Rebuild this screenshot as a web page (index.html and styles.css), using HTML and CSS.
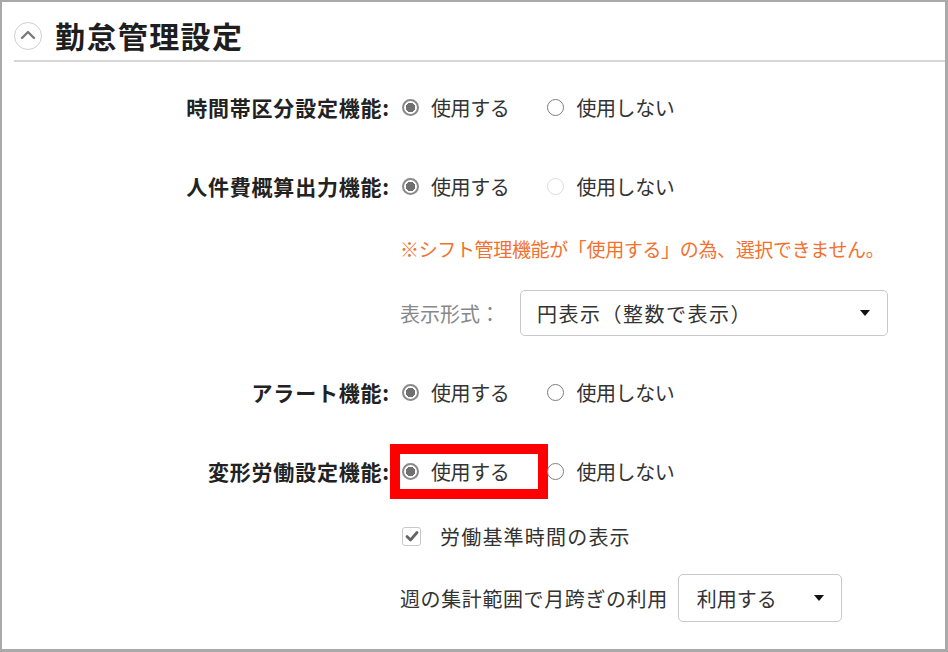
FILE: index.html
```html
<!DOCTYPE html>
<html lang="ja">
  <head>
    <meta charset="UTF-8" />
    <meta name="viewport" content="width=device-width, initial-scale=1.0" />
    <title>勤怠管理設定</title>
    <link rel="stylesheet" href="styles.css">
  </head>
  <body>
    <div class="frame">
      <div class="section-head">
        <span class="toggle">
          <svg width="16" height="10" viewBox="0 0 16 10"><polyline points="2,8 8,2 14,8" fill="none" stroke="#7a7a7a" stroke-width="2.4" stroke-linecap="round" stroke-linejoin="round"/></svg>
        </span>
        <h2 class="section-title">勤怠管理設定</h2>
      </div>

      <div class="form">
        <div class="field">
          <div class="field-row">
            <span class="field-label">時間帯区分設定機能:</span>
            <div class="options">
              <label class="option"><span class="radio is-checked"></span>使用する</label>
              <label class="option"><span class="radio"></span>使用しない</label>
            </div>
          </div>
        </div>

        <div class="field field-group">
          <div class="field-row">
            <span class="field-label">人件費概算出力機能:</span>
            <div class="options">
              <label class="option"><span class="radio is-checked"></span>使用する</label>
              <label class="option"><span class="radio is-disabled"></span>使用しない</label>
            </div>
          </div>
          <div class="sub sub-note">※シフト管理機能が「使用する」の為、選択できません。</div>
          <div class="sub sub-select">
            <span class="sub-label muted">表示形式：</span>
            <div class="select select-wide">円表示（整数で表示）<span class="caret"></span></div>
          </div>
        </div>

        <div class="field">
          <div class="field-row">
            <span class="field-label">アラート機能:</span>
            <div class="options">
              <label class="option"><span class="radio is-checked"></span>使用する</label>
              <label class="option"><span class="radio"></span>使用しない</label>
            </div>
          </div>
        </div>

        <div class="field">
          <div class="field-row">
            <span class="field-label">変形労働設定機能:</span>
            <div class="options">
              <label class="option"><span class="radio is-checked"></span>使用する<span class="highlight"></span></label>
              <label class="option"><span class="radio"></span>使用しない</label>
            </div>
          </div>
          <div class="sub sub-check">
            <span class="checkbox">
              <svg width="14" height="12" viewBox="0 0 14 12"><polyline points="2,6.5 5.5,10 12,2.5" fill="none" stroke="#666" stroke-width="2.8" stroke-linecap="round" stroke-linejoin="round"/></svg>
            </span>
            労働基準時間の表示
          </div>
          <div class="sub sub-select sub-last">
            <span class="sub-label">週の集計範囲で月跨ぎの利用</span>
            <div class="select select-short">利用する<span class="caret"></span></div>
          </div>
        </div>
      </div>
    </div>
  </body>
</html>
```

FILE: styles.css
```css
body {
  margin: 0;
  padding: 0;
  background: #fff;
  font-family: "Noto Sans CJK JP", "Noto Sans", sans-serif;
  color: #333;
}
.frame {
  width: 948px;
  height: 652px;
  box-sizing: border-box;
  border: 2px solid #a9a9a9;
  border-right-width: 3px;
  border-bottom-width: 3px;
  background: #fff;
  overflow: hidden;
}
.section-head {
  display: flex;
  align-items: center;
  height: 48px;
  padding-top: 10px;
  margin-left: 12px;
  border-bottom: 2px solid #d6d6d6;
}
.toggle {
  width: 28px;
  height: 28px;
  box-sizing: border-box;
  border: 1.5px solid #cfcfcf;
  border-radius: 50%;
  display: flex;
  align-items: center;
  justify-content: center;
}
.toggle svg {
  margin-top: -2px;
}
.section-title {
  margin: -3px 0 0 13px;
  font-size: 30px;
  font-weight: bold;
  color: #1e1e1e;
  line-height: 1;
  letter-spacing: 1.4px;
}
.form {
  margin-top: 25px;
}
.field {
  margin-bottom: 39px;
}
.field-group {
  margin-bottom: 36px;
}
.field-row {
  display: flex;
  align-items: center;
  height: 40px;
}
.field-label {
  width: 388px;
  text-align: right;
  font-size: 21px;
  font-weight: bold;
  color: #222;
  letter-spacing: 0.8px;
}
.options {
  display: flex;
  margin-left: 12px;
}
.option {
  position: relative;
  display: flex;
  align-items: center;
  font-size: 20px;
  color: #333;
  margin-right: 38px;
  letter-spacing: -0.4px;
}
.radio {
  width: 17px;
  height: 17px;
  box-sizing: border-box;
  border: 1.5px solid #7d7d7d;
  border-radius: 50%;
  margin-right: 12px;
  background: #fff;
}
.radio.is-checked {
  border: 2px solid #8a8a8a;
  background: radial-gradient(circle, #707070 0 4.5px, #fff 5px);
}
.radio.is-disabled {
  border: 1.5px solid #dcdcdc;
}
.highlight {
  position: absolute;
  left: -12px;
  top: -13px;
  width: 158px;
  height: 55px;
  box-sizing: border-box;
  border: 10px solid #ff0000;
}
.sub {
  margin-top: 22px;
  margin-left: 398px;
  display: flex;
  align-items: center;
  font-size: 20px;
}
.sub-note {
  height: 40px;
  color: #f2712e;
  font-size: 19px;
  letter-spacing: -0.35px;
}
.sub-select {
  height: 46px;
}
.sub-last {
  height: 48px;
  margin-top: 18px;
}
.sub-label {
  color: #333;
  margin-right: 10px;
  letter-spacing: 0.6px;
}
.muted {
  color: #888;
  margin-right: 20px;
  letter-spacing: 0;
}
.select {
  position: relative;
  height: 46px;
  box-sizing: border-box;
  border: 1.5px solid #c8c8c8;
  border-radius: 5px;
  display: flex;
  align-items: center;
  padding-left: 16px;
  color: #333;
}
.select-wide {
  width: 368px;
  letter-spacing: 1.5px;
}
.select-short {
  width: 164px;
  height: 48px;
  padding-left: 18px;
}
.caret {
  position: absolute;
  right: 17px;
  top: 50%;
  margin-top: -3px;
  border-left: 5px solid transparent;
  border-right: 5px solid transparent;
  border-top: 6px solid #111;
}
.sub-check {
  height: 40px;
  margin-top: 25px;
  margin-left: 400px;
  letter-spacing: 1.2px;
}
.checkbox {
  width: 19px;
  height: 19px;
  box-sizing: border-box;
  border: 1.5px solid #c9c9c9;
  border-radius: 3px;
  display: flex;
  align-items: center;
  justify-content: center;
  margin-right: 19px;
}
```
